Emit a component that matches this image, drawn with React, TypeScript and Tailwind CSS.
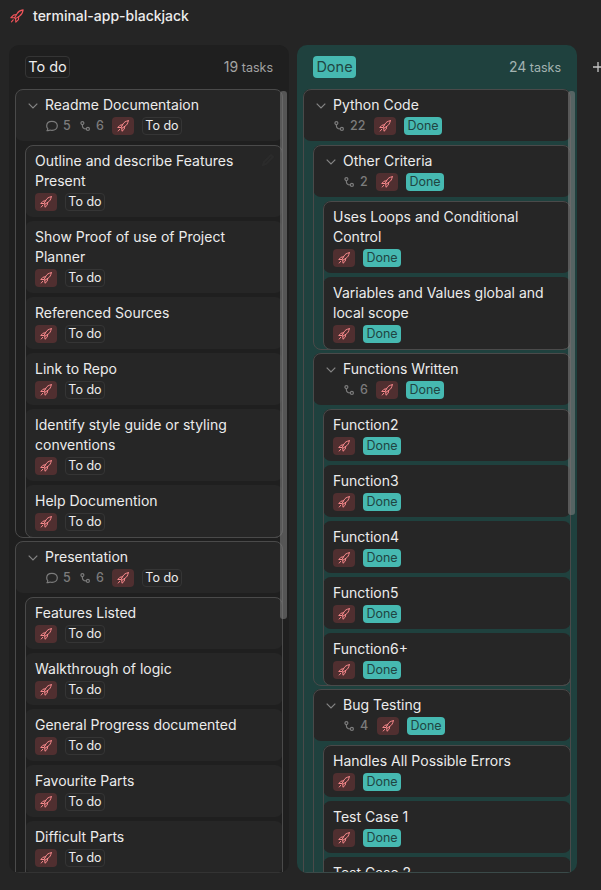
import type { ReactNode } from "react";

type Task = { title: string; edit?: boolean };
type Section = { title: string; comments?: number; subtasks: number; tasks: Task[]; continues?: boolean };

const todoSections: Section[] = [
  {
    title: "Readme Documentaion",
    comments: 5,
    subtasks: 6,
    tasks: [
      { title: "Outline and describe Features Present", edit: true },
      { title: "Show Proof of use of Project Planner" },
      { title: "Referenced Sources" },
      { title: "Link to Repo" },
      { title: "Identify style guide or styling conventions" },
      { title: "Help Documention" },
    ],
  },
  {
    title: "Presentation",
    comments: 5,
    subtasks: 6,
    continues: true,
    tasks: [
      { title: "Features Listed" },
      { title: "Walkthrough of logic" },
      { title: "General Progress documented" },
      { title: "Favourite Parts" },
      { title: "Difficult Parts" },
    ],
  },
];

const doneSections: Section[] = [
  {
    title: "Other Criteria",
    subtasks: 2,
    tasks: [
      { title: "Uses Loops and Conditional Control" },
      { title: "Variables and Values global and local scope" },
    ],
  },
  {
    title: "Functions Written",
    subtasks: 6,
    tasks: [
      { title: "Function2" },
      { title: "Function3" },
      { title: "Function4" },
      { title: "Function5" },
      { title: "Function6+" },
    ],
  },
  {
    title: "Bug Testing",
    subtasks: 4,
    tasks: [
      { title: "Handles All Possible Errors" },
      { title: "Test Case 1" },
      { title: "Test Case 2" },
    ],
  },
];

function Rocket({ className }: { className: string }) {
  return (
    <svg viewBox="0 0 24 24" fill="none" stroke="currentColor" strokeWidth="1.9" strokeLinejoin="round" strokeLinecap="round" className={className}>
      <path d="M22.500 1.500c-5.500.8-8.500 3-10.500 6.500L8 15l1.500 1.500L16 12.500c3.500-2.200 5.800-5.500 6.500-11z" />
      <path d="M11 9.500 6 10.500 1.500 15 8 15M15 13.200l-.5 5L10 22.500l-.5-6" />
      <path d="M5.500 18.500 2.500 22" />
    </svg>
  );
}

function Chevron() {
  return (
    <svg viewBox="0 0 10 6" fill="none" stroke="#858585" strokeWidth="1.200" className="ml-[13px] mr-[7px] mt-px h-1.5 w-2.5 shrink-0">
      <path d="M.7.7 5 5 9.300.7" />
    </svg>
  );
}

function CommentIcon() {
  return (
    <svg viewBox="0 0 12 12" fill="none" stroke="#7c7c7c" strokeWidth="1.200" strokeLinejoin="round" className="ml-px size-3 shrink-0">
      <path d="M2 10.700 1 10.700c.6-.8.9-1.300.8-2C1 7.900.7 7 .7 5.900.7 3.200 2.800 1.300 5.900 1.300s5.400 1.900 5.400 4.500-2.200 4.500-5.300 4.500c-.8 0-1.400-.1-2-.3-.6.400-1.200.7-2 .7z" />
    </svg>
  );
}

function SubtaskIcon() {
  return (
    <svg viewBox="0 0 12 12" fill="none" stroke="#7c7c7c" strokeWidth="1.200" className="size-3 shrink-0">
      <circle cx="3.400" cy="3.100" r="1.500" />
      <circle cx="8.900" cy="8.900" r="1.500" />
      <path d="M3.400 4.600v1.400c0 1.500.6 2.200 1.900 2.600l2.100.3" />
    </svg>
  );
}

function StatusChip({ done }: { done: boolean }) {
  return done ? (
    <span className="flex h-[18px] w-[38px] items-center justify-center rounded-[4px] bg-[#46b9b1] text-[12.500px] text-[#204542]">Done</span>
  ) : (
    <span className="flex h-[18px] w-10 items-center justify-center rounded-[4px] border border-[#353535] text-[12.500px] text-[#ececec]">To do</span>
  );
}

function RocketChip() {
  return (
    <span className="flex h-[18px] w-[22px] items-center justify-center rounded-[4px] bg-[#502f30] text-[#ff8d90]">
      <Rocket className="size-3" />
    </span>
  );
}

function Outline({ children, continues = false }: { children: ReactNode; continues?: boolean }) {
  return (
    <div
      className={`relative flex shrink-0 flex-col gap-1 after:pointer-events-none after:absolute after:inset-x-0 after:top-0 after:-bottom-px after:rounded-lg after:border after:border-[#4a4a4a] after:content-[''] ${
        continues ? "pb-4" : ""
      }`}
    >
      {children}
    </div>
  );
}

function HeaderCard({ title, comments, subtasks, done }: { title: string; comments?: number; subtasks: number; done: boolean }) {
  return (
    <div className="rounded-lg bg-[#262626] py-1.5">
      <div className="flex h-5 items-center">
        <Chevron />
        <span className="text-[14px] leading-5 text-[#ececec]">{title}</span>
      </div>
      <div className="mt-0.5 flex h-[18px] items-center gap-2 pl-[30px] text-[12.500px] font-medium text-[#7c7c7c]">
        {comments !== undefined && (
          <span className="flex w-[26px] items-center gap-[5px]">
            <CommentIcon />
            {comments}
          </span>
        )}
        <span className={subtasks > 9 ? "flex w-[33px] items-center gap-[5px]" : subtasks === 4 ? "flex w-[26px] items-center gap-[5px]" : "flex w-[25px] items-center gap-[5px]"}>
          <SubtaskIcon />
          {subtasks}
        </span>
        <span className="flex gap-2 font-normal">
          <RocketChip />
          <StatusChip done={done} />
        </span>
      </div>
    </div>
  );
}

function TaskCard({ task, done }: { task: Task; done: boolean }) {
  return (
    <div className="relative rounded-lg bg-[#262626] py-1.5 pl-2.5 pr-6">
      <div className="text-[14px] leading-5 text-[#ececec]">{task.title}</div>
      <div className="mt-0.5 flex gap-2">
        <RocketChip />
        <StatusChip done={done} />
      </div>
      {task.edit && (
        <svg viewBox="0 0 14 14" fill="none" stroke="#2b2b2b" strokeWidth="2" className="absolute right-2 top-2 size-3.5">
          <path d="M2 12l1-3 7-7 2 2-7 7z" />
        </svg>
      )}
    </div>
  );
}

function SectionGroup({ section, done }: { section: Section; done: boolean }) {
  return (
    <Outline continues={section.continues}>
      <HeaderCard title={section.title} comments={section.comments} subtasks={section.subtasks} done={done} />
      <div className="pl-2.5">
        <Outline continues={section.continues}>
          {section.tasks.map((task) => (
            <TaskCard key={task.title} task={task} done={done} />
          ))}
        </Outline>
      </div>
    </Outline>
  );
}

export default function App() {
  return (
    <div className="flex h-[890px] w-[601px] flex-col overflow-hidden bg-[#252525] font-['Inter','Liberation_Sans',sans-serif]">
      <header className="flex h-[45px] shrink-0 items-start pl-2.5 pt-1.5">
        <Rocket className="mt-[3px] size-3.5 text-[#f0545a]" />
        <h1 className="ml-[9px] text-[14px] font-medium leading-5 text-[#ececec]">terminal-app-blackjack</h1>
      </header>

      <main className="flex gap-2 pl-[9px]">
        <section className="relative h-[828px] w-[280px] shrink-0 overflow-hidden rounded-[10px] bg-[#1f1f1f]">
          <div className="flex h-11 items-center justify-between px-4">
            <span className="flex h-[22px] w-[45px] items-center justify-center rounded-[4px] border border-[#353535] text-[14.500px] text-[#ececec]">To do</span>
            <span className="text-[12.500px] text-[#a3a3a3]"><span className="text-[14px]">19</span> tasks</span>
          </div>
          <div className="ml-1.5 flex h-[784px] w-[268px] flex-col gap-1 overflow-hidden border-b border-[#333333]">
            {todoSections.map((section) => (
              <SectionGroup key={section.title} section={section} done={false} />
            ))}
          </div>
          <div className="absolute left-[271px] top-[46px] h-[528px] w-[7px] rounded-[3px] bg-[#8080808f]" />
        </section>

        <section className="relative h-[828px] w-[280px] shrink-0 overflow-hidden rounded-[10px] bg-[#1f413e]">
          <div className="flex h-11 items-center justify-between px-4">
            <span className="flex h-[22px] w-[43px] items-center justify-center rounded-[4px] bg-[#46b9b1] text-[14.500px] text-[#204542]">Done</span>
            <span className="text-[12.500px] text-[#a3b3b1]"><span className="text-[14px]">24</span> tasks</span>
          </div>
          <div className="ml-1.5 h-[784px] w-[268px] overflow-hidden border-b border-[#3a4a49]">
            <Outline>
              <HeaderCard title="Python Code" subtasks={22} done />
              <div className="flex flex-col gap-1 pl-2.5">
                {doneSections.map((section) => (
                  <SectionGroup key={section.title} section={section} done />
                ))}
              </div>
            </Outline>
          </div>
          <div className="absolute left-[271px] top-[46px] h-[424px] w-[7px] rounded-[3px] bg-[#8080808f]" />
        </section>

        <svg viewBox="0 0 10 10" stroke="#c5c5c5" strokeWidth="1.300" className="ml-2 mt-[17px] size-2.5 shrink-0">
          <path d="M0 5h10M5 0v10" />
        </svg>
      </main>
    </div>
  );
}
